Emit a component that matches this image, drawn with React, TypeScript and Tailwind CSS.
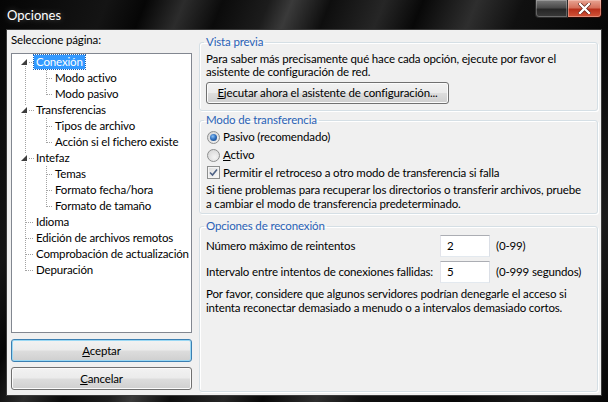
import React from 'react';

type Node = { label: string; children?: string[]; selected?: boolean };

const pages: Node[] = [
  { label: 'Conexión', children: ['Modo activo', 'Modo pasivo'], selected: true },
  { label: 'Transferencias', children: ['Tipos de archivo', 'Acción si el fichero existe'] },
  { label: 'Intefaz', children: ['Temas', 'Formato fecha/hora', 'Formato de tamaño'] },
  { label: 'Idioma' },
  { label: 'Edición de archivos remotos' },
  { label: 'Comprobación de actualización' },
  { label: 'Depuración' },
];

const DOT = '#a3a3a3';

// dotted connectors + expander glyph for one tree row
const Connector: React.FC<{ level: number; first?: boolean; last?: boolean; lastChild?: boolean; expander?: boolean }> = ({
  level,
  first,
  last,
  lastChild,
  expander,
}) => {
  if (level === 0) {
    return (
      <svg width="22" height="16" className="shrink-0" shapeRendering="crispEdges">
        {expander ? (
          <>
            {!first && <line x1="13.5" y1="0" x2="13.5" y2="4" stroke={DOT} strokeDasharray="1 1" />}
            {!last && <line x1="13.5" y1="12" x2="13.5" y2="16" stroke={DOT} strokeDasharray="1 1" />}
            <line x1="17" y1="8.5" x2="22" y2="8.5" stroke={DOT} strokeDasharray="1 1" />
            <polygon points="15,5 15,11 9,11" fill="#3d3d3d" shapeRendering="auto" />
          </>
        ) : (
          <>
            <line x1="13.5" y1={first ? 8 : 0} x2="13.5" y2={last ? 9 : 16} stroke={DOT} strokeDasharray="1 1" />
            <line x1="14" y1="8.5" x2="22" y2="8.5" stroke={DOT} strokeDasharray="1 1" />
          </>
        )}
      </svg>
    );
  }
  return (
    <svg width="41" height="16" className="shrink-0" shapeRendering="crispEdges">
      <line x1="13.5" y1="0" x2="13.5" y2="16" stroke={DOT} strokeDasharray="1 1" />
      <line x1="34.5" y1="0" x2="34.5" y2={lastChild ? 9 : 16} stroke={DOT} strokeDasharray="1 1" />
      <line x1="35" y1="8.5" x2="41" y2="8.5" stroke={DOT} strokeDasharray="1 1" />
    </svg>
  );
};

const PageTree: React.FC = () => (
  <div className="mt-[5px] h-[280px] border border-[#828790] bg-white">
    {pages.map((p, i) => (
      <React.Fragment key={p.label}>
        <div className="flex h-4 items-center">
          <Connector level={0} first={i === 0} last={i === pages.length - 1} expander={!!p.children} />
          <span
            className={`whitespace-nowrap px-[2px] leading-[14px] ${
              p.selected ? 'bg-[#3399ff] text-white outline outline-1 outline-dotted outline-[#1a5fb4]' : 'text-black'
            }`}
          >
            {p.label}
          </span>
        </div>
        {p.children?.map((c, j) => (
          <div key={c} className="flex h-4 items-center">
            <Connector level={1} lastChild={j === p.children!.length - 1} />
            <span className="whitespace-nowrap px-[2px] leading-[14px]">{c}</span>
          </div>
        ))}
      </React.Fragment>
    ))}
  </div>
);

const Button: React.FC<{ children: React.ReactNode; focused?: boolean; className?: string }> = ({ children, focused, className = '' }) => (
  <button
    className={`flex items-center justify-center rounded-[3px] border bg-[linear-gradient(#f2f2f2_0%,#ebebeb_48%,#dddddd_52%,#cfcfcf_100%)] text-black ${
      focused
        ? 'border-[#3c7fb1] shadow-[inset_0_0_0_1px_#9ad8f4]'
        : 'border-[#707070] shadow-[inset_0_0_0_1px_#fbfbfb]'
    } ${className}`}
  >
    {children}
  </button>
);

const Radio: React.FC<{ checked?: boolean }> = ({ checked }) => (
  <span className="flex h-[13px] w-[13px] shrink-0 items-center justify-center rounded-full border border-[#8e8f8f] bg-[radial-gradient(circle_at_60%_65%,#f4f4f4_0%,#dcdcdc_70%,#cfcfcf_100%)]">
    {checked && (
      <span className="h-[7px] w-[7px] rounded-full bg-[radial-gradient(circle_at_40%_35%,#8fc3f3_0%,#3172c2_45%,#163a6e_100%)]" />
    )}
  </span>
);

const Checkbox: React.FC = () => (
  <span className="flex h-[13px] w-[13px] shrink-0 items-center justify-center border border-[#8e8f8f] bg-[linear-gradient(135deg,#dcdcdc,#fbfbfb)] shadow-[inset_0_0_0_1px_#f4f4f4]">
    <svg width="9" height="9" viewBox="0 0 9 9">
      <path d="M1 4.5 L3.5 7 L8 1.5" fill="none" stroke="#4d6185" strokeWidth="1.6" />
    </svg>
  </span>
);

const Field: React.FC<{ value: string }> = ({ value }) => (
  <div className="flex h-[22px] w-[50px] shrink-0 items-center border border-[#abadb3] border-b-[#e3e9ef] border-r-[#dbdfe6] border-l-[#e2e3ea] bg-white pl-[6px]">
    {value}
  </div>
);

const GroupBox: React.FC<{ title: string; className?: string; children: React.ReactNode }> = ({ title, className = '', children }) => (
  <fieldset
    className={`w-full min-w-0 rounded-[3px] border border-[#d5dfe5] px-[6px] shadow-[inset_1px_1px_0_#ffffff,1px_1px_0_#ffffff] ${className}`}
  >
    <legend className="-ml-[2px] px-[2px] leading-[14px] text-[#2a62b6]">{title}</legend>
    {children}
  </fieldset>
);

export default function App() {
  return (
    <div className="flex h-[402px] w-[608px] flex-col overflow-hidden bg-[linear-gradient(112deg,#050505_0%,#141414_14%,#060606_19%,#2c2c2c_24%,#0b0b0b_29%,#1c1c1c_35%,#3a3a3a_38%,#0e0e0e_43%,#262626_50%,#080808_55%,#2e2e2e_62%,#101010_68%,#070707_80%,#1a1a1a_90%,#060606_100%)] font-['Segoe_UI','Lato',sans-serif] text-[11.5px] tracking-[-0.15px] text-black">
      {/* title bar */}
      <div className="flex h-[29px] shrink-0 items-start justify-between">
        <span className="mt-[6px] ml-[7px] text-[13px] tracking-normal text-white [text-shadow:0_0_6px_rgba(255,255,255,0.35)]">Opciones</span>
        <div className="mr-[6px] flex">
          <div className="h-[18px] w-[33px] rounded-bl-[4px] border border-t-0 border-[#2a2a2a] bg-[linear-gradient(#7a7a7a_0%,#4a4a4a_45%,#262626_55%,#3a3a3a_100%)] shadow-[inset_0_0_0_1px_rgba(255,255,255,0.25)]" />
          <div className="flex h-[18px] w-[34px] items-center justify-center rounded-br-[4px] border border-t-0 border-l-0 border-[#2a0a05] bg-[linear-gradient(#e8a493_0%,#d5705b_45%,#b8301b_55%,#d2553a_100%)] shadow-[inset_0_0_0_1px_rgba(255,220,210,0.4)]">
            <svg width="13" height="11" viewBox="0 0 13 11">
              <path d="M2 1 L11 10 M11 1 L2 10" stroke="#5a1a10" strokeWidth="3.6" strokeLinecap="square" />
              <path d="M2 1 L11 10 M11 1 L2 10" stroke="#ffffff" strokeWidth="2.4" strokeLinecap="square" />
            </svg>
          </div>
        </div>
      </div>

      {/* client area */}
      <div className="mx-[6px] mb-[6px] flex min-w-0 flex-1 border border-[#3a3a3a] bg-[#f0f0f0]">
        {/* page list + dialog buttons */}
        <div className="flex w-[190px] shrink-0 flex-col pl-[4px] pr-[5px] pt-[2px]">
          <div className="leading-[16px]">Seleccione página:</div>
          <PageTree />
          <Button focused className="mt-[6px] h-[23px] w-full">
            <span>
              <u>A</u>ceptar
            </span>
          </Button>
          <Button className="mt-[5px] h-[23px] w-full">
            <span>
              <u>C</u>ancelar
            </span>
          </Button>
        </div>

        {/* option groups */}
        <div className="ml-[2px] mr-[3px] flex min-w-0 flex-1 flex-col pt-[5px]">
          <GroupBox title="Vista previa" className="h-[76px]">
            <p className="mt-[3px] whitespace-nowrap leading-[13px]">
              Para saber más precisamente qué hace cada opción, ejecute por favor el
              <br />
              asistente de configuración de red.
            </p>
            <Button className="mt-[4px] h-[22px] w-[243px]">
              <span>
                <u>E</u>jecutar ahora el asistente de configuración...
              </span>
            </Button>
          </GroupBox>

          <GroupBox title="Modo de transferencia" className="mt-[2px] h-[101px]">
            <div className="mt-[1px] flex h-[18px] items-center gap-[3px] pl-[1px]">
              <Radio checked />
              <span>Pasivo (recomendado)</span>
            </div>
            <div className="flex h-[18px] items-center gap-[3px] pl-[1px]">
              <Radio />
              <span>
                <u>A</u>ctivo
              </span>
            </div>
            <div className="flex h-[17px] items-center gap-[3px] pl-[1px]">
              <Checkbox />
              <span>Permitir el retroceso a otro modo de transferencia si falla</span>
            </div>
            <p className="mt-[2px] whitespace-nowrap leading-[14px]">
              Si tiene problemas para recuperar los directorios o transferir archivos, pruebe
              <br />
              a cambiar el modo de transferencia predeterminado.
            </p>
          </GroupBox>

          <GroupBox title="Opciones de reconexión" className="mt-[5px] h-[173px]">
            <div className="mt-[2px] flex h-[22px] items-center">
              <span className="w-[234px] shrink-0 whitespace-nowrap">Número máximo de reintentos</span>
              <Field value="2" />
              <span className="ml-[6px] whitespace-nowrap">(0-99)</span>
            </div>
            <div className="mt-[4px] flex h-[22px] items-center">
              <span className="w-[234px] shrink-0 whitespace-nowrap">Intervalo entre intentos de conexiones fallidas:</span>
              <Field value="5" />
              <span className="ml-[6px] whitespace-nowrap">(0-999 segundos)</span>
            </div>
            <p className="mt-[4px] whitespace-nowrap leading-[14px]">
              Por favor, considere que algunos servidores podrían denegarle el acceso si
              <br />
              intenta reconectar demasiado a menudo o a intervalos demasiado cortos.
            </p>
          </GroupBox>
        </div>
      </div>
    </div>
  );
}
